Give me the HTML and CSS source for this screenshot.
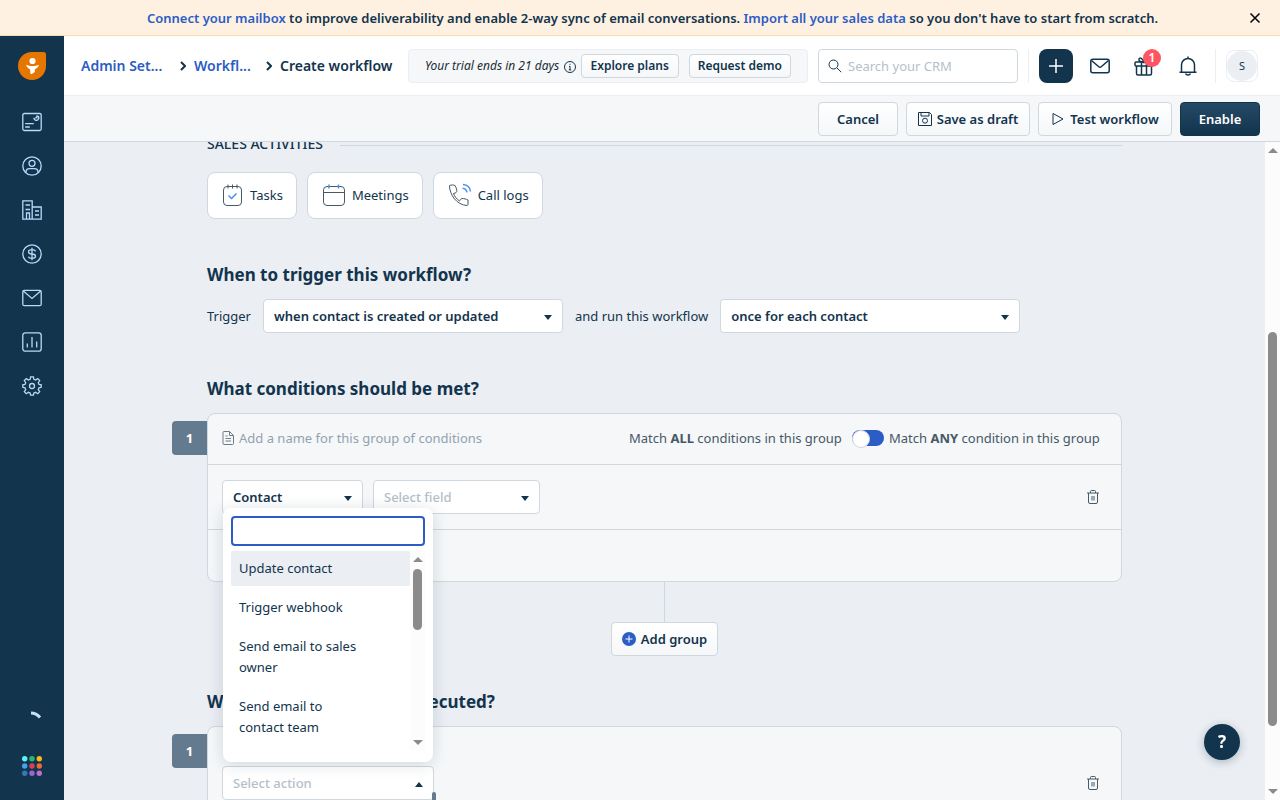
FILE: index.html
```html
<!DOCTYPE html>
<html lang="en">

<head>
    <meta charset="UTF-8">
    <meta name="viewport" content="width=device-width, initial-scale=1.0">
    <title>Create workflow</title>

    <link rel="stylesheet" href="styles.css">
</head>

<body>

    <div class="banner">
        <p><a href="#">Connect your mailbox</a> to improve deliverability and enable 2-way sync of email conversations. <a href="#">Import all your sales data</a> so you don't have to start from scratch.</p>
        <button class="banner-close" aria-label="Close">
            <svg width="12" height="12" viewBox="0 0 12 12"><path d="M1.500 1.500l9 9M10.500 1.500l-9 9" /></svg>
        </button>
    </div>

    <div class="app">
        <nav class="sidebar">
            <a class="logo" href="#" aria-label="Home">
                <svg width="28" height="28" viewBox="0 0 28 28">
                    <path fill="#e57700" d="M14 0h11.500a2.500 2.500 0 0 1 2.500 2.500V14A14 14 0 1 1 14 0z" />
                    <circle cx="14.500" cy="9" r="3.100" fill="#fff" />
                    <path fill="#fff" d="M8 12.800c2 .8 4 1.200 6.500 1.200s4.500-.4 6.500-1.200c-.5 2.200-2.200 3.700-4.200 4.700v2.500l-3.300 2.200-1.300-1V17.500C10.200 16.500 8.500 15 8 12.800z" />
                </svg>
            </a>
            <a href="#" aria-label="Dashboard">
                <svg class="icon" width="20" height="20" viewBox="0 0 20 20"><rect x=".8" y="1.500" width="18.400" height="17" rx="1.500" /><path d="M3.200 11.700h8.600M3.200 15h4.600M12 5.800a2.400 2.400 0 1 0 3.500-2M14.800 3.500v2.300h-1.600" /></svg>
            </a>
            <a href="#" aria-label="Contacts">
                <svg class="icon" width="20" height="20" viewBox="0 0 20 20"><circle cx="10" cy="10" r="9.200" /><circle cx="10" cy="7.300" r="3" /><path d="M4 16.500c0-2.500 1.500-3.800 3.500-3.800h5c2 0 3.500 1.300 3.500 3.800" /></svg>
            </a>
            <a href="#" aria-label="Accounts">
                <svg class="icon" width="20" height="20" viewBox="0 0 20 20"><path d="M.8 19.200V.8h9.400v18.400zM10.200 7h9v12.200h-9M4.500 19v-6h3v6M3.500 5h4.500M3.500 9.500h4.500M13 11h4M13 15h4" /></svg>
            </a>
            <a href="#" aria-label="Deals">
                <svg class="icon" width="20" height="20" viewBox="0 0 20 20"><circle cx="10" cy="10" r="9.200" /><path d="M13.500 7.300C13.200 6.200 12 5.700 10 5.700c-2.300 0-3.500.7-3.500 2.100S7.700 10 10 10s3.500.8 3.500 2.200-1.200 2.100-3.500 2.100-3.200-.6-3.500-1.700M10 3.800v12.400" /></svg>
            </a>
            <a href="#" aria-label="Conversations">
                <svg class="icon" width="20" height="20" viewBox="0 0 20 20"><rect x=".8" y="2.300" width="18.400" height="15.400" rx="1.500" /><path d="M1.300 3l8.700 7.500L18.700 3" /></svg>
            </a>
            <a href="#" aria-label="Analytics">
                <svg class="icon" width="20" height="20" viewBox="0 0 20 20"><rect x=".8" y=".8" width="18.400" height="18.400" rx="2.500" /><path d="M5.300 15.500v-4M10 15.500V5M14.700 15.500V9.500" /></svg>
            </a>
            <a href="#" aria-label="Admin settings">
                <svg class="icon" width="20" height="20" viewBox="0 0 20 20"><circle cx="10" cy="10" r="2.500" /><path d="M8.600.8h2.800l.5 2.500 1.700.7 2.100-1.400 2 2-1.400 2.100.7 1.700 2.200.4v2.500l-2.200.5-.7 1.800 1.400 2.100-2 2-2.100-1.400-1.700.7-.5 2.200H8.600l-.5-2.200-1.700-.7-2.100 1.400-2-2 1.400-2.100-.7-1.800-2.200-.5V8.800L3 8.400l.7-1.700-1.400-2.100 2-2L6.400 4l1.700-.7z" /></svg>
            </a>
            <div class="sidebar-bottom">
                <svg class="spinner" width="20" height="20" viewBox="0 0 20 20"><path d="M9 5c3.500 0 6.500 1.500 9 4.500" /></svg>
                <button class="switcher" aria-label="Switch product">
                    <svg width="20" height="20" viewBox="0 0 20 20">
                        <circle cx="2.700" cy="2.700" r="2.700" fill="#5cf3f5" /><circle cx="10" cy="2.700" r="2.700" fill="#2bb673" /><circle cx="17.300" cy="2.700" r="2.700" fill="#fcb818" />
                        <circle cx="2.700" cy="10" r="2.700" fill="#4a9fe8" /><circle cx="10" cy="10" r="2.700" fill="#d6405f" /><circle cx="17.300" cy="10" r="2.700" fill="#ee6b32" />
                        <circle cx="2.700" cy="17.300" r="2.700" fill="#3479b5" /><circle cx="10" cy="17.300" r="2.700" fill="#9866cf" /><circle cx="17.300" cy="17.300" r="2.700" fill="#bd6fcc" />
                    </svg>
                </button>
            </div>
        </nav>

        <div class="page">
            <header class="header">
                <div class="breadcrumb">
                    <a class="crumb-admin" href="#">Admin Set...</a>
                    <svg width="6" height="10" viewBox="0 0 6 10"><path d="M1 1l4 4-4 4" /></svg>
                    <a class="crumb-flows" href="#">Workfl...</a>
                    <svg width="6" height="10" viewBox="0 0 6 10"><path d="M1 1l4 4-4 4" /></svg>
                    <span>Create workflow</span>
                </div>
                <div class="trial">
                    <em>Your trial ends in 21 days</em>
                    <svg class="info" width="12" height="12" viewBox="0 0 12 12"><circle cx="6" cy="6" r="5.500" /><path d="M6 5.200V9M5 5.400h1M4.800 8.900h2.400M6 2.800v1" /></svg>
                    <button class="btn small">Explore plans</button>
                    <button class="btn small">Request demo</button>
                </div>
                <div class="search">
                    <svg width="14" height="14" viewBox="0 0 14 14"><circle cx="5.500" cy="5.500" r="4.500" /><path d="M9 9l4.200 4.200" /></svg>
                    <input type="search" aria-label="Search" placeholder="Search your CRM">
                </div>
                <div class="actions">
                    <button class="add" aria-label="Quick add">
                        <svg width="16" height="16" viewBox="0 0 16 16"><path d="M8 1v14M1 8h14" /></svg>
                    </button>
                    <button class="tool" aria-label="Email">
                        <svg width="20" height="20" viewBox="0 0 20 20"><rect x=".8" y="3.300" width="18.400" height="13.400" rx="2" /><path d="M1.500 4.500l7.300 6.300a1.800 1.800 0 0 0 2.400 0l7.300-6.300" /></svg>
                    </button>
                    <button class="tool" aria-label="What's new, 1">
                        <svg width="20" height="20" viewBox="0 0 20 20"><rect x="1" y="6" width="18" height="4" rx="1" /><path d="M2.500 10v7.500a1.500 1.500 0 0 0 1.500 1.500h12a1.500 1.500 0 0 0 1.500-1.500V10M7.500 6v13M12.500 6v13M10 6C5.500 6 4.500 4.500 5 3c.7-1.800 3.500-1 5 3 1.500-4 4.300-4.800 5-3 .5 1.500-.5 3-5 3z" /></svg>
                        <span class="count">1</span>
                    </button>
                    <button class="tool" aria-label="Notifications">
                        <svg width="20" height="20" viewBox="0 0 20 20"><path d="M3.500 16V9a6.500 6.500 0 0 1 13 0v7M1.500 16.200h17M7.500 17.500c.8 2 4.200 2 5 0M10 .5V2" /></svg>
                    </button>
                </div>
                <button class="avatar" aria-label="Profile"><span>S</span></button>
            </header>

            <div class="toolbar">
                <button class="btn">Cancel</button>
                <button class="btn draft">
                    <svg width="14" height="14" viewBox="0 0 14 14"><path d="M.5.5h11l2 2v11H.5zM3 .5v3.500h8V.5" /><circle cx="7" cy="8.700" r="2.500" /></svg>
                    Save as draft
                </button>
                <button class="btn test">
                    <svg width="14" height="14" viewBox="0 0 14 14"><path d="M2 1.500L12 7 2 12.500z" /></svg>
                    Test workflow
                </button>
                <button class="btn primary">Enable</button>
            </div>

            <div class="body">
                <main class="main">
                    <div class="content">
                        <div class="label">SALES ACTIVITIES</div>
                        <div class="tiles">
                            <button class="tile">
                                <svg width="22" height="24" viewBox="0 0 22 24"><rect x="1.500" y="3.500" width="18" height="19" rx="3.500" /><path d="M6 1.500v4M10.500 1.500v4M15 1.500v4" /><path class="blue" d="M6.500 12.500l3 3 5-5" /></svg>
                                Tasks
                            </button>
                            <button class="tile">
                                <svg width="24" height="24" viewBox="0 0 24 24"><rect x="1.500" y="3.500" width="21" height="19" rx="3.500" /><path d="M1.500 9.500h21" /><path class="blue" d="M7 1.500v4M16.500 1.500v4" /></svg>
                                Meetings
                            </button>
                            <button class="tile">
                                <svg width="24" height="24" viewBox="0 0 24 24"><path d="M1.500 2.500C1.500 12 9 22 19 22.500c.8 0 1-.5 1-1.500v-4c-2-1-4-1.500-6-1.500-1.500.5-2 1.500-2.500 2.500C8.500 16 6 12.500 5.500 10.500c2.500-.3 3.500-1.500 3.300-3.200C8.500 5.500 8 4 7 2.500 5.500 1.800 3 1.800 1.500 2.500z" /><path class="blue" d="M15 1.500c4 .3 7 3 7.500 7M14.500 5.300c2.300.2 4 1.700 4.500 4" /></svg>
                                Call logs
                            </button>
                        </div>

                        <h2>When to trigger this workflow?</h2>
                        <div class="trigger">
                            <label for="event">Trigger</label>
                            <div class="select wide">
                                <select id="event"><option>when contact is created or updated</option></select>
                            </div>
                            <label for="repeat">and run this workflow</label>
                            <div class="select wide">
                                <select id="repeat"><option>once for each contact</option></select>
                            </div>
                        </div>

                        <h2>What conditions should be met?</h2>
                        <section class="card">
                            <span class="step">1</span>
                            <div class="card-head">
                                <svg width="12" height="14" viewBox="0 0 12 14"><path d="M2 .5h5.500l4 4v8a1 1 0 0 1-1 1H2a1 1 0 0 1-1-1v-11a1 1 0 0 1 1-1zM7.500.5v4h4M3.500 5h2M3.500 7.500h5.500M3.500 10h5.500" /></svg>
                                <input class="group-name" type="text" aria-label="Group name" placeholder="Add a name for this group of conditions">
                                <label class="match" for="match">Match <b>ALL</b> conditions in this group</label>
                                <input class="toggle" type="checkbox" role="switch" id="match">
                                <label class="match" for="match">Match <b>ANY</b> condition in this group</label>
                            </div>
                            <div class="card-row">
                                <div class="select entity">
                                    <select aria-label="Entity"><option>Contact</option></select>
                                </div>
                                <div class="select field">
                                    <select class="empty" aria-label="Field"><option>Select field</option></select>
                                </div>
                                <button class="trash" aria-label="Delete condition">
                                    <svg width="12" height="14" viewBox="0 0 12 14"><path d="M0 3h12M1.500 3v9a1.500 1.500 0 0 0 1.500 1.500h6a1.500 1.500 0 0 0 1.500-1.500V3M3.500 3V1.500a1 1 0 0 1 1-1h3a1 1 0 0 1 1 1V3M5 6v4.500M7 6v4.500" /></svg>
                                </button>
                            </div>
                            <div class="card-foot"></div>
                        </section>
                        <div class="add-group">
                            <button class="btn">
                                <svg width="14" height="14" viewBox="0 0 14 14"><circle cx="7" cy="7" r="7" fill="#2c5cc5" stroke="none" /><path stroke="#fff" d="M7 3.500v7M3.500 7h7" /></svg>
                                Add group
                            </button>
                        </div>

                        <h2 class="last">What actions should be executed?</h2>
                        <section class="card actions-card">
                            <span class="step">1</span>
                            <div class="card-row">
                                <div class="select action open">
                                    <select class="empty" aria-label="Action"><option>Select action</option></select>
                                    <span class="marker"></span>
                                    <div class="menu">
                                        <input type="text" aria-label="Search actions">
                                        <div class="menu-body">
                                            <ul role="listbox" aria-label="Actions">
                                                <li role="option" aria-selected="true">Update contact</li>
                                                <li role="option">Trigger webhook</li>
                                                <li role="option">Send email to sales owner</li>
                                                <li role="option">Send email to contact team</li>
                                            </ul>
                                            <div class="scroll">
                                                <i class="up"></i>
                                                <i class="thumb"></i>
                                                <i class="down"></i>
                                            </div>
                                        </div>
                                    </div>
                                </div>
                                <button class="trash" aria-label="Delete action">
                                    <svg width="12" height="14" viewBox="0 0 12 14"><path d="M0 3h12M1.500 3v9a1.500 1.500 0 0 0 1.500 1.500h6a1.500 1.500 0 0 0 1.500-1.500V3M3.500 3V1.500a1 1 0 0 1 1-1h3a1 1 0 0 1 1 1V3M5 6v4.500M7 6v4.500" /></svg>
                                </button>
                            </div>
                        </section>
                    </div>
                </main>
                <div class="scroll page-scroll">
                    <i class="up"></i>
                    <i class="thumb"></i>
                    <i class="down"></i>
                </div>
            </div>
        </div>
    </div>

    <button class="help" aria-label="Help">?</button>

</body>

</html>
```
FILE: styles.css
```css
* {
    box-sizing: border-box;
}

html,
body {
    height: 100%;
    margin: 0;
}

body {
    display: flex;
    flex-direction: column;
    overflow: hidden;
    background: #ebeef3;
    color: #12344d;
    font-family: "Noto Sans", "Open Sans", sans-serif;
    font-size: 13px;
    line-height: 20px;
}

button,
input,
select {
    font: inherit;
    color: inherit;
}

button {
    display: flex;
    align-items: center;
    justify-content: center;
    padding: 0;
    border: 0;
    background: none;
    white-space: nowrap;
}

a {
    color: #2c5cc5;
    text-decoration: none;
}

svg {
    flex-shrink: 0;
    fill: none;
    stroke: #12344d;
}

/* top banner */
.banner {
    display: flex;
    align-items: center;
    height: 36px;
    padding: 0 19px 0 56px;
    flex-shrink: 0;
    background: #fef1e1;
    border-bottom: 1px solid #f8dcae;
    font-weight: 600;

    p {
        flex: 1;
        margin: 0;
        text-align: center;
        white-space: nowrap;
    }

    .banner-close svg {
        stroke: #000;
        stroke-width: 1.5;
    }
}

.app {
    display: flex;
    flex: 1;
    min-height: 0;
}

/* sidebar */
.sidebar {
    display: flex;
    flex-direction: column;
    align-items: center;
    gap: 24px;
    width: 64px;
    padding: 16px 0 24px;
    flex-shrink: 0;
    background: #12344d;

    a,
    svg {
        display: block;
    }

    .logo {
        margin-bottom: 8px;

        svg {
            stroke: none;
        }
    }

    .icon {
        stroke: #b5dbfb;
        stroke-width: 1.3;
    }

    .sidebar-bottom {
        display: flex;
        flex-direction: column;
        align-items: center;
        gap: 28px;
        margin-top: auto;
    }

    .spinner {
        stroke: #c6e2fb;
        stroke-width: 3;
    }

    .switcher svg {
        stroke: none;
    }
}

.page {
    display: flex;
    flex-direction: column;
    flex: 1;
    min-width: 0;
}

/* header */
.header {
    display: flex;
    align-items: center;
    height: 60px;
    padding: 0 22px 0 17px;
    flex-shrink: 0;
    background: #fff;
    border-bottom: 1px solid #ebeef2;
}

.breadcrumb {
    display: flex;
    align-items: center;
    flex: 1;
    font-size: 14px;
    font-weight: 600;
    white-space: nowrap;

    .crumb-admin {
        width: 84px;
        margin-right: 15px;
    }

    .crumb-flows {
        width: 61px;
        margin-right: 11px;
    }

    svg {
        margin-right: 8px;
        stroke-width: 2;
    }
}

.trial {
    display: flex;
    align-items: center;
    height: 34px;
    width: 400px;
    padding: 0 16px;
    background: #f5f7f9;
    border: 1px solid #ebeef2;
    border-radius: 4px;
    font-size: 12px;
    white-space: nowrap;

    em {
        color: #222c36;
    }

    .info {
        margin: 2px auto 0;
    }

    .small + .small {
        margin-left: 10px;
    }
}

.search {
    display: flex;
    align-items: center;
    gap: 6px;
    width: 200px;
    height: 34px;
    margin: 0 10px;
    padding: 0 9px;
    border: 1px solid #cfd7df;
    border-radius: 4px;

    input {
        flex: 1;
        min-width: 0;
        padding: 0;
        border: 0;
        background: none;
        outline: none;
    }
}

input::placeholder {
    color: #b4bfc9;
    opacity: 1;
}

.actions {
    display: flex;
    align-items: center;
    gap: 10px;
    height: 34px;
    padding: 0 10px;
    border-left: 1px solid #ebeef2;
    border-right: 1px solid #ebeef2;

    .add {
        width: 34px;
        height: 34px;
        background: #12344d;
        border-radius: 8px;

        svg {
            stroke: #fff;
            stroke-width: 1.5;
        }
    }

    .tool {
        position: relative;
        width: 34px;
        height: 34px;

        svg {
            stroke-width: 1.5;
        }
    }

    .count {
        position: absolute;
        top: 0;
        right: 0;
        width: 18px;
        height: 18px;
        background: #ff5461;
        border-radius: 50%;
        color: #fff;
        font-size: 12px;
        font-weight: 600;
        line-height: 18px;
    }
}

.avatar {
    width: 32px;
    height: 32px;
    margin-left: 10px;
    border: 1px solid #ebeef2;
    border-radius: 8px;

    span {
        width: 30px;
        height: 30px;
        background: #ebeef2;
        border-radius: 50%;
        font-size: 11px;
        line-height: 30px;
    }
}

/* buttons */
.btn {
    gap: 5px;
    height: 34px;
    min-width: 80px;
    padding: 0 10px;
    background: linear-gradient(#fff, #f5f7f9);
    border: 1px solid #cfd7df;
    border-radius: 4px;
    font-weight: 600;

    &.small {
        height: 24px;
        min-width: 98px;
        padding: 0 8px;
        font-size: 12px;
    }

    &.draft {
        min-width: 124px;
        padding: 0 8px;
    }

    &.test {
        min-width: 134px;
    }

    &.primary {
        background: linear-gradient(#264966, #12344d);
        border-color: #12344d;
        color: #fff;
    }
}

.toolbar {
    display: flex;
    align-items: center;
    justify-content: flex-end;
    gap: 8px;
    height: 46px;
    padding: 0 20px;
    flex-shrink: 0;
    background: #f5f7f9;
    border-bottom: 1px solid #cfd7df;
}

/* scrolling area */
.body {
    display: flex;
    flex: 1;
    min-height: 0;
}

.main {
    flex: 1;
    min-width: 0;
    overflow: hidden;
}

.content {
    max-width: 915px;
    margin: 0 auto;
}

.label {
    display: flex;
    gap: 17px;
    height: 7px;
    font-size: 14px;
    font-weight: 500;
    line-height: 4px;

    &::after {
        content: "";
        flex: 1;
        align-self: center;
        height: 1px;
        background: #cfd7df;
    }
}

.tiles {
    display: flex;
    gap: 10px;
    margin-top: 23px;
}

.tile {
    gap: 6px;
    height: 47px;
    padding: 0 13px 2px 14px;
    background: #fff;
    border: 1px solid #cfd7df;
    border-radius: 8px;

    svg {
        stroke: #475867;
    }

    .blue {
        stroke: #4a90f0;
        stroke-width: 1.5;
    }
}

h2 {
    margin: 44px 0 12px;
    font-size: 17px;
    font-weight: 700;
    line-height: 24px;

    &.last {
        margin-top: 34px;
    }
}

.trigger {
    display: flex;
    align-items: center;
    gap: 12px;
}

.select {
    position: relative;

    select {
        display: block;
        width: 100%;
        height: 34px;
        padding: 0 30px 0 10px;
        appearance: none;
        background: #fff;
        border: 1px solid #cfd7df;
        border-radius: 4px;
        font-weight: 600;
    }

    .empty {
        color: #b4bfc9;
        font-weight: 500;
    }

    /* caret */
    &::after {
        content: "";
        position: absolute;
        top: 16px;
        right: 11px;
        border: 4px solid transparent;
        border-top: 5px solid #12344d;
        border-bottom: 0;
    }

    &.open::after {
        border-top: 0;
        border-bottom: 5px solid #12344d;
    }
}

.wide {
    width: 300px;
}

.entity {
    width: 141px;
}

.field {
    width: 167px;
}

.action {
    width: 212px;
}

/* condition and action groups */
.card {
    position: relative;
    background: #f5f7f9;
    border: 1px solid #cfd7df;
    border-radius: 8px;
}

.step {
    position: absolute;
    top: 7px;
    left: -36px;
    width: 35px;
    height: 34px;
    background: #647a8e;
    border-radius: 4px 0 0 4px;
    color: #fff;
    font-weight: 700;
    line-height: 34px;
    text-align: center;
}

.card-head {
    display: flex;
    align-items: center;
    gap: 5px;
    height: 51px;
    padding: 0 14px 2px;
    border-bottom: 1px solid #cfd7df;

    svg {
        stroke: #6f7c87;
    }
}

.group-name {
    flex: 1;
    min-width: 0;
    padding: 0;
    border: 0;
    background: none;
    outline: none;

    &::placeholder {
        color: #92a2b1;
    }
}

.match {
    min-width: 218px;
    color: #475867;
    white-space: nowrap;
}

.toggle {
    display: flex;
    width: 32px;
    height: 16px;
    margin: 0;
    appearance: none;
    background: #2c5cc5;
    border-radius: 8px;

    &::before {
        content: "";
        width: 16px;
        height: 16px;
        background: #fff;
        border: 1px solid #cfd7df;
        border-radius: 50%;
    }
}

.card-row {
    display: flex;
    align-items: center;
    gap: 10px;
    padding: 15px 14px;
}

.card-head + .card-row {
    border-bottom: 1px solid #cfd7df;
}

.card-foot {
    height: 51px;
}

.trash {
    width: 28px;
    height: 28px;
    margin-left: auto;

    svg {
        stroke: #475867;
    }
}

.add-group {
    display: flex;
    flex-direction: column;
    align-items: center;

    &::before {
        content: "";
        width: 1px;
        height: 40px;
        background: #cfd7df;
    }
}

.actions-card .card-row {
    padding: 39px 14px;
}

.marker {
    position: absolute;
    right: -2px;
    bottom: -8px;
    width: 4px;
    height: 16px;
    background: #647a8e;
    border-radius: 2px;
}

/* open drop-down */
.menu {
    position: absolute;
    left: 1px;
    right: 1px;
    bottom: calc(100% + 4px);
    height: 254px;
    padding: 8px;
    background: #fff;
    border-radius: 8px;
    box-shadow: 0 2px 16px rgba(18, 52, 77, 0.16);

    input {
        display: block;
        width: 100%;
        height: 30px;
        padding: 0 8px;
        background: #fff;
        border: 2px solid #2c5cc5;
        border-radius: 4px;
    }

    .menu-body {
        display: flex;
        height: 200px;
        margin-top: 5px;
        overflow: hidden;
    }

    ul {
        display: flex;
        flex-direction: column;
        gap: 4px;
        flex: 1;
        margin: 0;
        padding: 0;
        list-style: none;
    }

    li {
        padding: 7px 40px 7px 8px;
        border-radius: 2px;
        line-height: 21px;
    }

    li[aria-selected="true"] {
        background: #ebeef3;
    }
}

/* scroll bars */
.scroll {
    display: flex;
    flex-direction: column;
    align-items: center;
    width: 15px;
    padding: 6px 0;
    background: #fcfcfc;

    i {
        border: 5px solid transparent;
    }

    .up {
        border-top: 0;
        border-bottom-color: #8b8b8b;
    }

    .down {
        margin-top: auto;
        border-bottom: 0;
        border-top-color: #8b8b8b;
    }

    .thumb {
        width: 9px;
        height: 61px;
        margin-top: 7px;
        border: 0;
        border-radius: 5px;
        background: #8b8b8b;
    }
}

.page-scroll .thumb {
    height: 61%;
    margin-top: 179px;
}

.help {
    position: fixed;
    right: 40px;
    bottom: 40px;
    width: 36px;
    height: 36px;
    background: #12344d;
    border-radius: 50%;
    box-shadow: 0 2px 8px rgba(18, 52, 77, 0.3);
    color: #fff;
    font-size: 17px;
    font-weight: 700;
}
```
